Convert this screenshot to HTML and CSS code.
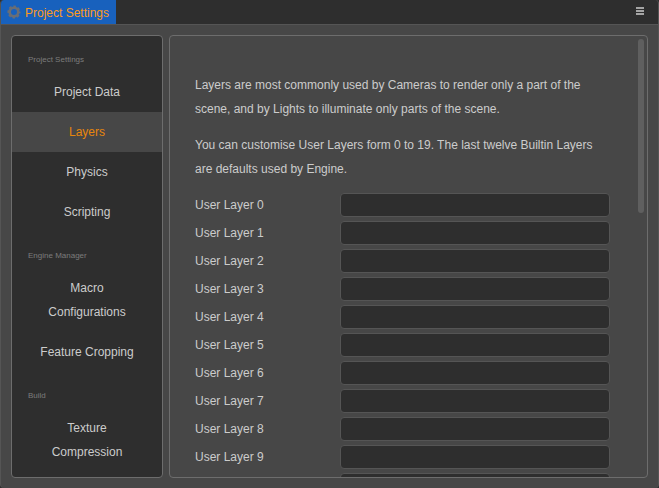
FILE: index.html
```html
<!DOCTYPE html>
<html lang="en">
<head>
<meta charset="utf-8">
<title>Project Settings</title>
<link rel="stylesheet" href="styles.css">
</head>
<body>
<div class="window">
  <header class="tabbar">
    <div class="tab">
      <svg class="gear" viewBox="0 0 14 14" width="14" height="14">
        <circle cx="7" cy="7" r="4.3" fill="none" stroke="#6a6e75" stroke-width="2.6"/>
        <circle cx="7" cy="7" r="5.8" fill="none" stroke="#6a6e75" stroke-width="1.5" stroke-dasharray="2.6 1.955" stroke-dashoffset="1.3"/>
      </svg>
      <span class="tab-title">Project Settings</span>
    </div>
    <div class="menu"><i></i><i></i><i></i></div>
  </header>
  <main class="content">
    <nav class="sidebar">
      <h2>Project Settings</h2>
      <a>Project Data</a>
      <a class="active">Layers</a>
      <a>Physics</a>
      <a>Scripting</a>
      <h2>Engine Manager</h2>
      <a>Macro Configurations</a>
      <a>Feature Cropping</a>
      <h2>Build</h2>
      <a>Texture Compression</a>
    </nav>
    <section class="panel">
      <p>Layers are most commonly used by Cameras to render only a part of the scene, and by Lights to illuminate only parts of the scene.</p>
      <p>You can customise User Layers form 0 to 19. The last twelve Builtin Layers are defaults used by Engine.</p>
      <div class="row"><label>User Layer 0</label><input></div>
      <div class="row"><label>User Layer 1</label><input></div>
      <div class="row"><label>User Layer 2</label><input></div>
      <div class="row"><label>User Layer 3</label><input></div>
      <div class="row"><label>User Layer 4</label><input></div>
      <div class="row"><label>User Layer 5</label><input></div>
      <div class="row"><label>User Layer 6</label><input></div>
      <div class="row"><label>User Layer 7</label><input></div>
      <div class="row"><label>User Layer 8</label><input></div>
      <div class="row"><label>User Layer 9</label><input></div>
      <div class="row"><label></label><input></div>
      <div class="scroll-thumb"></div>
    </section>
  </main>
</div>
</body>
</html>
```
FILE: styles.css
```css
* { box-sizing: border-box; }
body {
  margin: 0;
  background: #2e2e2e;
  color: #cccccc;
  font: 12px/24px "Liberation Sans", Arial, sans-serif;
}
.window {
  display: flex;
  flex-direction: column;
  height: 488px;
  border: 1px solid #555;
  border-width: 0 1px;
  border-radius: 4px;
  overflow: hidden;
  background: #474747;
}
.tabbar {
  display: flex;
  justify-content: space-between;
  height: 25px;
  flex: none;
  background: #2e2e2e;
  border-bottom: 1px solid #555;
}
.tab {
  display: flex;
  align-items: center;
  width: 115px;
  padding-left: 6px;
  background: #1861bd;
  color: #fd9a1c;
  white-space: nowrap;
}
.gear { margin-right: 4px; flex: none; }
.tab-title { line-height: 24px; padding-top: 1px; }
.menu {
  display: flex;
  flex-direction: column;
  gap: 1px;
  padding: 7px 14px 0 0;
}
.menu i { width: 8px; height: 2px; background: #a5a5a5; }
.content {
  display: flex;
  flex: 1;
  gap: 6px;
  padding: 10px;
  min-height: 0;
}
.sidebar, .panel {
  border: 1px solid #6d6d6d;
  border-radius: 4px;
  height: 443px;
  overflow: hidden;
}
.sidebar {
  width: 152px;
  flex: none;
  background: #2e2e2e;
  text-align: center;
}
.sidebar h2 {
  height: 36px;
  margin: 0;
  padding: 12px 0 0 16px;
  font-size: 8px;
  font-weight: normal;
  line-height: 24px;
  text-align: left;
  color: #7c7c7c;
}
.sidebar a { display: block; padding: 8px 24px; }
.sidebar a.active { background: #474747; color: #e8860c; }
.panel {
  position: relative;
  flex: 1;
  padding: 37px 38px 0 25px;
}
.panel p { margin: 0 0 12px; width: 414px; }
.row {
  display: flex;
  width: 415px;
  height: 24px;
  margin-bottom: 4px;
}
.row label { width: 145px; flex: none; }
.row input {
  width: 270px;
  height: 24px;
  padding: 0 6px;
  background: #2e2e2e;
  border: 1px solid #555;
  border-radius: 4px;
}
.scroll-thumb {
  position: absolute;
  top: 3px;
  right: 3px;
  width: 6px;
  height: 174px;
  border-radius: 3px;
  background: #5f5f5f;
}
```
